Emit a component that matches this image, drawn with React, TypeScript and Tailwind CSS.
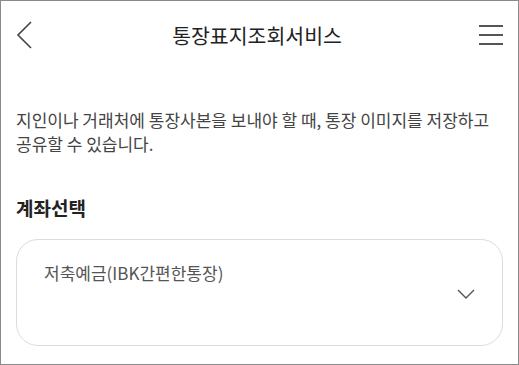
import { useState } from 'react'

const FONT = { fontFamily: '"Noto Sans CJK KR", "Noto Sans", sans-serif' }

function BackIcon() {
  return (
    <svg width="18" height="30" viewBox="0 0 18 30" fill="none">
      <path d="M15 2 L2 15 L15 28" stroke="#444" strokeWidth="1.6" />
    </svg>
  )
}

function MenuIcon() {
  return (
    <svg width="26" height="22" viewBox="0 0 26 22" fill="none">
      <path d="M1 2 H25 M1 11 H25 M1 20 H25" stroke="#555" strokeWidth="1.8" />
    </svg>
  )
}

function ChevronDown() {
  return (
    <svg width="20" height="12" viewBox="0 0 20 12" fill="none">
      <path d="M2 2 L10 10 L18 2" stroke="#555" strokeWidth="1.4" />
    </svg>
  )
}

export default function App() {
  const [account] = useState('저축예금(IBK간편한통장)')

  return (
    <div
      className="w-[519px] h-[365px] bg-white border border-[#8a8a8a] flex flex-col overflow-hidden"
      style={FONT}
    >
      <header className="h-[68px] flex items-center justify-between pl-[15px] pr-[14px]">
        <button className="w-[20px] flex items-center">
          <BackIcon />
        </button>
        <h1 className="text-[20.5px] text-[#222]">통장표지조회서비스</h1>
        <button className="w-[26px] flex items-center">
          <MenuIcon />
        </button>
      </header>

      <div className="flex flex-col px-[15px] pt-[39px]">
        <p className="text-[17px] leading-[24px] text-[#444]">
          지인이나 거래처에 통장사본을 보내야 할 때, 통장 이미지를 저장하고
          <br />
          공유할 수 있습니다.
        </p>

        <h2 className="mt-[40px] text-[19px] leading-[24px] font-bold text-[#222]">계좌선택</h2>

        <button className="mt-[19px] h-[107px] w-full rounded-[22px] border border-[#dcdcdc] flex items-start justify-between pl-[27px] pr-[26px] pt-[21px] text-left">
          <span className="text-[17px] leading-[24px] text-[#555]">{account}</span>
          <span className="mt-[27px]">
            <ChevronDown />
          </span>
        </button>
      </div>
    </div>
  )
}
